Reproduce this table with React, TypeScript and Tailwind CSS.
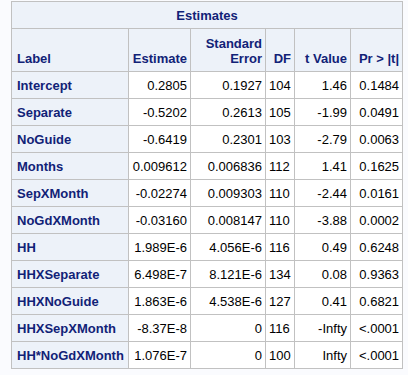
import React from "react";

const rows: [string, string, string, string, string, string][] = [
  ["Intercept", "0.2805", "0.1927", "104", "1.46", "0.1484"],
  ["Separate", "-0.5202", "0.2613", "105", "-1.99", "0.0491"],
  ["NoGuide", "-0.6419", "0.2301", "103", "-2.79", "0.0063"],
  ["Months", "0.009612", "0.006836", "112", "1.41", "0.1625"],
  ["SepXMonth", "-0.02274", "0.009303", "110", "-2.44", "0.0161"],
  ["NoGdXMonth", "-0.03160", "0.008147", "110", "-3.88", "0.0002"],
  ["HH", "1.989E-6", "4.056E-6", "116", "0.49", "0.6248"],
  ["HHXSeparate", "6.498E-7", "8.121E-6", "134", "0.08", "0.9363"],
  ["HHXNoGuide", "1.863E-6", "4.538E-6", "127", "0.41", "0.6821"],
  ["HHXSepXMonth", "-8.37E-8", "0", "116", "-Infty", "<.0001"],
  ["HH*NoGdXMonth", "1.076E-7", "0", "100", "Infty", "<.0001"],
];

export default function App() {
  return (
    <div
      className="w-[408px] h-[375px] bg-[#fafbfe] pl-[11px] pt-[1px]"
      style={{ fontFamily: '"Liberation Sans", Arial, sans-serif' }}
    >
      <table className="border-collapse table-fixed w-[392px] text-[13px] leading-[15px]">
        <colgroup>
          <col className="w-[117px]" />
          <col className="w-[62px]" />
          <col className="w-[75px]" />
          <col className="w-[29px]" />
          <col className="w-[56px]" />
          <col className="w-[52px]" />
        </colgroup>
        <thead>
          <tr className="h-[27px]">
            <th
              colSpan={6}
              className="border border-[#c1c1c1] bg-[#edf2f9] text-[#112277] font-bold text-center p-0"
            >
              Estimates
            </th>
          </tr>
          <tr className="h-[43px]">
            <th className="border border-[#c1c1c1] bg-[#edf2f9] text-[#112277] font-bold text-left align-bottom pl-[5px] pr-[3px] pb-[5px]">
              Label
            </th>
            <th className="border border-[#c1c1c1] bg-[#edf2f9] text-[#112277] font-bold text-right align-bottom pr-[3px] pl-0 pb-[5px]">
              Estimate
            </th>
            <th className="border border-[#c1c1c1] bg-[#edf2f9] text-[#112277] font-bold text-right align-bottom pr-[3px] pl-0 pb-[5px]">
              Standard
              <br />
              Error
            </th>
            <th className="border border-[#c1c1c1] bg-[#edf2f9] text-[#112277] font-bold text-right align-bottom pr-[3px] pl-0 pb-[5px]">
              DF
            </th>
            <th className="border border-[#c1c1c1] bg-[#edf2f9] text-[#112277] font-bold text-right align-bottom pr-[3px] pl-0 pb-[5px]">
              t Value
            </th>
            <th className="border border-[#c1c1c1] bg-[#edf2f9] text-[#112277] font-bold text-right align-bottom pr-[3px] pl-0 pb-[5px]">
              Pr &gt; |t|
            </th>
          </tr>
        </thead>
        <tbody>
          {rows.map((r) => (
            <tr key={r[0]} className="h-[27px]">
              <th className="border border-[#c1c1c1] bg-[#edf2f9] text-[#112277] font-bold text-left pl-[5px] pr-0 py-0 whitespace-nowrap">
                {r[0]}
              </th>
              <td className="border border-[#c1c1c1] bg-white text-black text-right pr-[3px] pl-0 py-0">
                {r[1]}
              </td>
              <td className="border border-[#c1c1c1] bg-white text-black text-right pr-[3px] pl-0 py-0">
                {r[2]}
              </td>
              <td className="border border-[#c1c1c1] bg-white text-black text-left pl-[3px] pr-0 py-0">
                {r[3]}
              </td>
              <td className="border border-[#c1c1c1] bg-white text-black text-right pr-[3px] pl-0 py-0">
                {r[4]}
              </td>
              <td className="border border-[#c1c1c1] bg-white text-black text-right pr-[3px] pl-0 py-0">
                {r[5]}
              </td>
            </tr>
          ))}
        </tbody>
      </table>
    </div>
  );
}
